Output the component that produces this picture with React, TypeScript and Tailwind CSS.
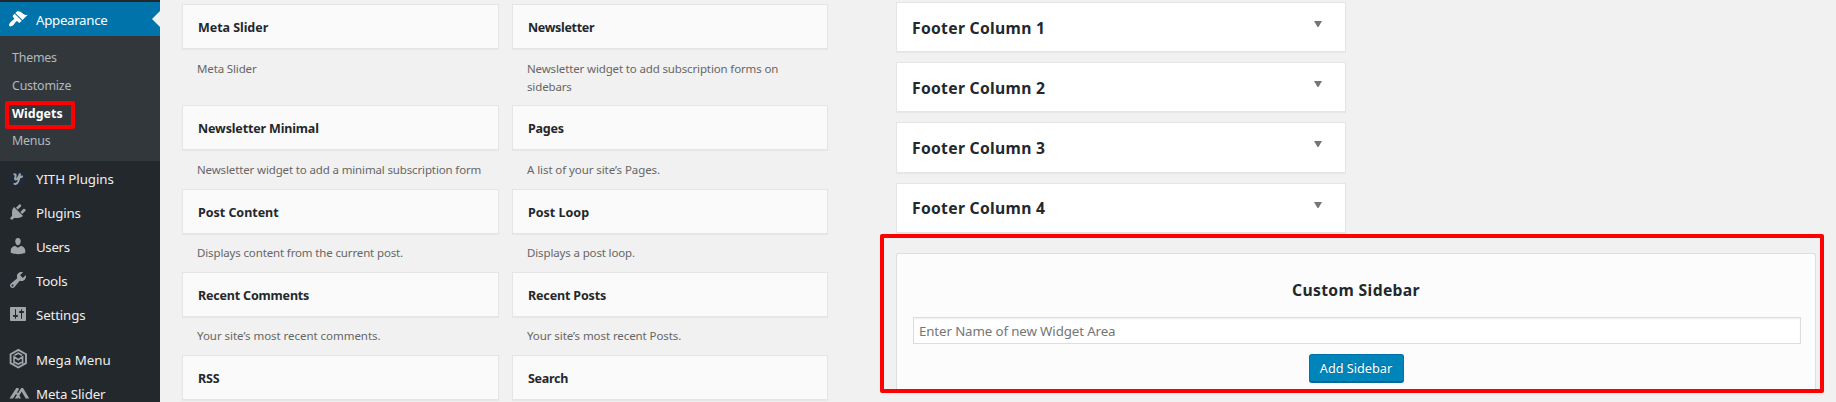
import type { ReactNode } from "react";

const glyph = "h-5 w-5 shrink-0 fill-current";

const Brush = () => (
  <svg viewBox="0 0 20 20" className={glyph}>
    <path d="M14.48 11.06L7.41 3.99l1.5-1.5c.5-.56 2.3-.47 3.51.32 1.21.8 1.43 1.28 2.91 2.1 1.18.64 2.45 1.26 4.45.85zm-.71.71L6.7 4.7 4.93 6.47c-.39.39-.39 1.02 0 1.41l1.06 1.06c.39.39.39 1.03 0 1.42-.6.6-1.43 1.11-2.21 1.69-.35.26-.7.53-1.01.84C1.43 14.23.4 16.08 1.4 17.07c.99 1 2.84-.03 4.18-1.36.31-.31.58-.66.85-1.02.57-.78 1.08-1.61 1.69-2.21.39-.39 1.02-.39 1.41 0l1.06 1.06c.39.39 1.02.39 1.41 0z" />
  </svg>
);

const Yith = () => (
  <svg viewBox="0 0 20 20" className={glyph}>
    <circle cx="9.5" cy="10.500" r="7.8" fill="#1e2a3b" />
    <path
      d="M5.600 6.700c1.600-.8 2.400 0 2 1.600l-.5 1.700c-.3 1.300.4 1.800 1.700 1.100 1.500-.8 2.500-2.600 3.200-5.600-.4 3.800-1.200 7.800-2.800 9.500-1 1.100-2.600 1.200-3.200.2M9.500 10.300l5.300-2"
      fill="none"
      stroke="#a0a5aa"
      strokeWidth="2"
    />
  </svg>
);

const Plug = () => (
  <svg viewBox="0 0 20 20" className={glyph}>
    <path d="M13.11 4.36L9.87 7.6 8 5.73l3.24-3.24c.35-.34 1.05-.2 1.56.32.52.51.66 1.21.31 1.55zm-8 1.77l.91-1.12 9.01 9.01-1.19.84c-.71.71-2.63 1.16-3.82 1.16H6.14L4.9 17.26c-.59.59-1.54.59-2.12 0-.59-.58-.59-1.53 0-2.12l1.24-1.24v-3.88c0-1.13.4-3.19 1.09-3.89zm7.26 3.97l3.24-3.24c.34-.35 1.04-.21 1.55.31.52.51.66 1.21.31 1.55l-3.24 3.25z" />
  </svg>
);

const User = () => (
  <svg viewBox="0 0 20 20" className={glyph}>
    <path d="M10 9.25c-2.27 0-2.73-3.44-2.73-3.44C7 4.02 7.82 2 9.97 2c2.16 0 2.98 2.02 2.71 3.81 0 0-.41 3.44-2.68 3.44zm0 2.57L12.72 10c2.39 0 4.52 2.33 4.52 4.53v2.49s-3.65 1.13-7.24 1.13c-3.65 0-7.24-1.13-7.24-1.13v-2.49c0-2.25 1.94-4.48 4.47-4.48z" />
  </svg>
);

const Wrench = () => (
  <svg viewBox="0 0 20 20" className={glyph}>
    <path d="M16.68 9.77c-1.34 1.34-3.3 1.67-4.95.99l-5.41 6.52c-.99.99-2.59.99-3.58 0s-.99-2.59 0-3.57l6.52-5.42c-.68-1.65-.35-3.61.99-4.95 1.28-1.28 3.12-1.62 4.72-1.06l-2.89 2.89 2.82 2.82 2.86-2.87c.53 1.58.18 3.39-1.08 4.65zM3.81 16.21c.4.39 1.04.39 1.43 0 .4-.4.4-1.04 0-1.43-.39-.4-1.03-.4-1.43 0-.39.39-.39 1.03 0 1.43z" />
  </svg>
);

const Sliders = () => (
  <svg viewBox="0 0 20 20" className={glyph}>
    <path d="M18 16V4c0-.55-.45-1-1-1H3c-.55 0-1 .45-1 1v12c0 .55.45 1 1 1h14c.55 0 1-.45 1-1zM8 11h1c.55 0 1 .45 1 1s-.45 1-1 1H8v1.5c0 .28-.22.5-.5.5s-.5-.22-.5-.5V13H6c-.55 0-1-.45-1-1s.45-1 1-1h1V5.5c0-.28.22-.5.5-.5s.5.22.5.5V11zm5-2h-1c-.55 0-1-.45-1-1s.45-1 1-1h1V5.5c0-.28.22-.5.5-.5s.5.22.5.5V7h1c.55 0 1 .45 1 1s-.45 1-1 1h-1v5.5c0 .28-.22.5-.5.5s-.5-.22-.5-.5V9z" />
  </svg>
);

const Hexagon = () => (
  <svg viewBox="0 0 20 20" className="h-5 w-5 shrink-0 overflow-visible" fill="none" stroke="currentColor">
    <path d="M10.300 .9l7.700 4.400v8.800l-7.700 4.400-7.700-4.400V5.300z" strokeWidth="1.900" />
    <path d="M6 14.700V7.700l4.300 3 4.300-3v7M7 13.200l3.300 2 3.300-2M6.500 6.200l3.800-2 3.800 2" strokeWidth="1.600" />
  </svg>
);

const Peaks = () => (
  <svg viewBox="0 0 20 20" className="h-5 w-5 shrink-0 overflow-visible fill-current">
    <path d="M1.500 15.600L8.300 5h2l.7 1.200-6 9.400zM6.800 15.600L13.200 5h1.800l6.300 10.600h-3.600L13.600 8.600l-3.800 7zM8.600 8.200l4.500 7.400h-2.200L7.600 10z" />
  </svg>
);

type Item = { label: string; icon: ReactNode; text: string };

const mainItems: Item[] = [
  { label: "YITH Plugins", icon: <Yith />, text: "tracking-[-0.08px]" },
  { label: "Plugins", icon: <Plug />, text: "tracking-[-0.15px]" },
  { label: "Users", icon: <User />, text: "tracking-[-0.35px]" },
  { label: "Tools", icon: <Wrench />, text: "tracking-[-0.2px]" },
  { label: "Settings", icon: <Sliders />, text: "tracking-[-0.15px]" },
];

const pluginItems: Item[] = [
  { label: "Mega Menu", icon: <Hexagon />, text: "tracking-[0px]" },
  { label: "Meta Slider", icon: <Peaks />, text: "tracking-[-0.1px]" },
];

const MenuRow = ({ label, icon, text }: Item) => (
  <li className="flex h-[34px] items-center pl-2 text-[#a0a5aa]">
    {icon}
    <span className={`mt-0.5 ml-2 text-[13.3px] leading-[18px] text-[#eee] ${text}`}>{label}</span>
  </li>
);

const widgets = [
  ["Meta Slider", "Meta Slider", "h-[101px]", "tracking-[-0.05px]", "pt-[11px]"],
  ["Newsletter", "Newsletter widget to add subscription forms on sidebars", "h-[101px]", "tracking-[-0.33px]", "pt-[11px]"],
  ["Newsletter Minimal", "Newsletter widget to add a minimal subscription form", "h-[84px]", "tracking-[-0.15px]", "pt-[11px]"],
  ["Pages", "A list of your site’s Pages.", "h-[84px]", "tracking-[-0.2px]", "pt-[11px] tracking-[-0.08px]"],
  ["Post Content", "Displays content from the current post.", "h-[83px]", "tracking-[-0.03px]", "pt-[10px]"],
  ["Post Loop", "Displays a post loop.", "h-[83px]", "tracking-[0px]", "pt-[10px]"],
  ["Recent Comments", "Your site’s most recent comments.", "h-[83px]", "tracking-[-0.18px]", "pt-[10px] tracking-[-0.04px]"],
  ["Recent Posts", "Your site’s most recent Posts.", "h-[83px]", "tracking-[-0.15px]", "pt-[10px] tracking-[-0.08px]"],
  ["RSS", "", "h-[47px]", "tracking-[-0.2px]", ""],
  ["Search", "", "h-[47px]", "tracking-[-0.3px]", ""],
];

const areas = [
  ["Footer Column 1", "h-[50px]", "pt-[13px]"],
  ["Footer Column 2", "h-[50px]", "pt-[13px]"],
  ["Footer Column 3", "h-[51px]", "pt-[13px]"],
  ["Footer Column 4", "h-[50px]", "pt-[12px]"],
];

export default function App() {
  return (
    <div className="flex h-[402px] w-[1836px] overflow-hidden bg-[#f1f1f1] font-['Noto_Sans','Open_Sans',sans-serif] text-[#23282d]">
      <aside className="w-40 shrink-0 bg-[#23282d] pt-0.5">
        <div className="relative flex h-[34px] items-center bg-[#0073aa] pl-2 text-white">
          <Brush />
          <span className="mt-0.5 ml-2 text-[13.3px] leading-[18px] tracking-[-0.32px]">Appearance</span>
          <svg viewBox="0 0 8 16" className="absolute top-[9px] right-0 h-4 w-2 fill-[#f1f1f1]">
            <path d="M8 0v16L0 8z" />
          </svg>
        </div>
        <ul className="h-[125px] bg-[#32373c] pt-2 pl-3 text-[12.4px] tracking-[-0.2px] text-[#b4b9be]">
          <li className="flex h-7 items-center">Themes</li>
          <li className="flex h-7 items-center">Customize</li>
          <li className="relative flex h-7 items-center font-bold tracking-[0.05px] text-white">
            Widgets
            <span className="absolute top-px -left-[7px] h-7 w-[70px] rounded-[2px] border-4 border-[#ff0000]" />
          </li>
          <li className="flex h-[27px] items-center">Menus</li>
        </ul>
        <ul>
          {mainItems.map((item) => (
            <MenuRow key={item.label} {...item} />
          ))}
        </ul>
        <ul className="mt-[11px]">
          {pluginItems.map((item) => (
            <MenuRow key={item.label} {...item} />
          ))}
        </ul>
      </aside>

      <main className="flex pl-[22px]">
        <section className="grid w-[646px] shrink-0 grid-cols-[317px_316px] content-start gap-x-[13px] pt-1 tracking-[-0.14px]">
          {widgets.map(([title, description, height, tracking, body]) => (
            <div key={title} className={height}>
              <h3
                className={`flex h-[45px] items-center border border-[#e5e5e5] bg-[#fafafa] pt-[3px] pl-[15px] text-[12.5px] leading-[18px] font-bold shadow-[0_1px_1px_rgba(0,0,0,0.04)] ${tracking}`}
              >
                {title}
              </h3>
              <p className={`px-[15px] text-[11.5px] leading-[18px] text-[#666] ${body}`}>{description}</p>
            </div>
          ))}
        </section>

        <section className="ml-[68px] w-[920px] shrink-0 pt-0.5">
          <div className="flex flex-col gap-2.5">
            {areas.map(([name, height, offset]) => (
              <div
                key={name}
                className={`flex w-[450px] justify-between border border-[#e5e5e5] bg-white pr-[23px] pl-[15px] shadow-[0_1px_1px_rgba(0,0,0,0.04)] ${height}`}
              >
                <h2 className={`text-[15.7px] leading-6 font-bold tracking-[0.3px] ${offset}`}>{name}</h2>
                <svg viewBox="0 0 8 6" className="mt-[18px] h-1.5 w-2 fill-[#72777c]">
                  <path d="M0 0h8L4.5 6h-1z" />
                </svg>
              </div>
            ))}
          </div>

          <div className="relative mt-5 flex h-[138px] flex-col items-center rounded-t-[3px] border border-b-0 border-[#dfdfdf] bg-[#fcfcfc] px-4 pt-6">
            <h2 className="text-[15.7px] leading-6 font-bold tracking-[0.35px]">Custom Sidebar</h2>
            <input
              placeholder="Enter Name of new Widget Area"
              className="mt-[15px] h-[27px] w-[888px] self-start border border-[#ddd] bg-white px-[5px] pt-px text-[13.3px] tracking-[-0.12px] shadow-[inset_0_1px_2px_rgba(0,0,0,0.07)] outline-none placeholder:text-[#757575]"
            />
            <button className="mt-[10px] h-7 w-[95px] shrink-0 rounded-[3px] border border-[#0073aa] border-b-[#006799] bg-[#0085ba] text-[12.7px] leading-[27px] whitespace-nowrap text-white shadow-[0_1px_0_#006799] [text-shadow:0_-1px_1px_#006799]">
              Add Sidebar
            </button>
            <span className="pointer-events-none absolute -top-5 -left-[17px] h-[159px] w-[944px] rounded-[2px] border-4 border-[#ff0000]" />
          </div>
        </section>
      </main>
    </div>
  );
}
